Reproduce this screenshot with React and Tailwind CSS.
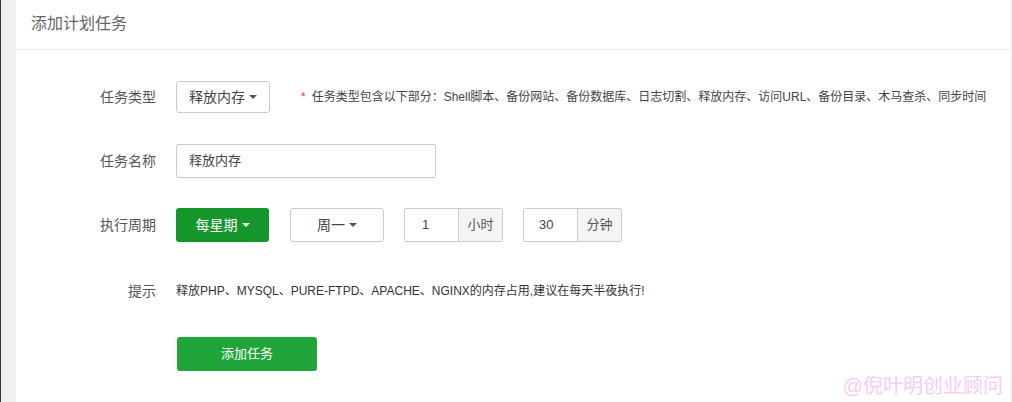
import React from "react";

const Caret = ({ className = "" }) => (
  <span className={"inline-block w-0 h-0 border-l-[4px] border-r-[4px] border-t-[4px] border-l-transparent border-r-transparent ml-[4px] align-middle " + className} />
);

export default function App() {
  return (
    <div
      className="w-[1012px] h-[402px] flex bg-[#f0f0f0] overflow-hidden text-[#333]"
      style={{ fontFamily: '"Liberation Sans", "Noto Sans CJK SC", sans-serif' }}
    >
      <div className="w-[1px] bg-[#2f343b] shrink-0" />
      <div className="w-[15px] shrink-0" />
      <div className="flex-1 bg-white relative flex flex-col mr-[1px]">
        <div className="h-[50px] border-b border-[#ececec] flex items-center pl-[15px] pb-[1px] text-[16px] text-[#666]">
          添加计划任务
        </div>
        <div className="flex flex-col pt-[31px]">
          {/* Row 1 */}
          <div className="flex items-center h-[32px]">
            <div className="w-[140px] text-right text-[14px] text-[#555]">任务类型</div>
            <div className="ml-[20px] w-[94px] h-[32px] border border-[#ccc] rounded-[3px] flex items-center justify-center text-[14px] text-[#444]">
              释放内存<Caret className="border-t-[#555]" />
            </div>
            <div className="ml-[31px] text-[12px] text-[#444] flex items-center">
              <span className="text-[#ff2b5e] mr-[6px]">*</span>
              任务类型包含以下部分：Shell脚本、备份网站、备份数据库、日志切割、释放内存、访问URL、备份目录、木马查杀、同步时间
            </div>
          </div>
          {/* Row 2 */}
          <div className="flex items-center h-[34px] mt-[31px]">
            <div className="w-[140px] text-right text-[14px] text-[#555]">任务名称</div>
            <div className="ml-[20px] w-[260px] h-[34px] border border-[#ccc] rounded-[2px] flex items-center pl-[12px] text-[13px] text-[#444]">
              释放内存
            </div>
          </div>
          {/* Row 3 */}
          <div className="flex items-center h-[34px] mt-[30px]">
            <div className="w-[140px] text-right text-[14px] text-[#555]">执行周期</div>
            <div className="ml-[20px] w-[93px] h-[34px] bg-[#15962d] rounded-[3px] flex items-center justify-center text-[14px] text-white">
              每星期<Caret className="border-t-white" />
            </div>
            <div className="ml-[21px] w-[94px] h-[34px] border border-[#ccc] rounded-[3px] flex items-center justify-center text-[14px] text-[#444]">
              周一<Caret className="border-t-[#555]" />
            </div>
            <div className="ml-[20px] flex h-[34px] border border-[#ccc] rounded-[2px]">
              <div className="w-[53px] flex items-center pl-[17px] text-[13px] text-[#444]">1</div>
              <div className="w-[44px] border-l border-[#ccc] bg-[#f4f4f4] flex items-center justify-center text-[13px] text-[#555]">小时</div>
            </div>
            <div className="ml-[20px] flex h-[34px] border border-[#ccc] rounded-[2px]">
              <div className="w-[53px] flex items-center pl-[15px] text-[13px] text-[#444]">30</div>
              <div className="w-[44px] border-l border-[#ccc] bg-[#f4f4f4] flex items-center justify-center text-[13px] text-[#555]">分钟</div>
            </div>
          </div>
          {/* Row 4 */}
          <div className="flex items-center h-[20px] mt-[39px]">
            <div className="w-[140px] text-right text-[14px] text-[#555]">提示</div>
            <div className="ml-[20px] text-[12px] text-[#333]">
              释放PHP、MYSQL、PURE-FTPD、APACHE、NGINX的内存占用,建议在每天半夜执行!
            </div>
          </div>
          {/* Row 5 */}
          <div className="flex mt-[36px]">
            <div className="w-[161px]" />
            <div className="w-[140px] h-[34px] bg-[#20a53a] rounded-[3px] flex items-center justify-center text-[13px] text-white">
              添加任务
            </div>
          </div>
        </div>
        <div className="absolute right-[8px] bottom-[3px] text-[20px] leading-[26px] text-[#f9c9f7]">
          @倪叶明创业顾问
        </div>
      </div>
    </div>
  );
}
